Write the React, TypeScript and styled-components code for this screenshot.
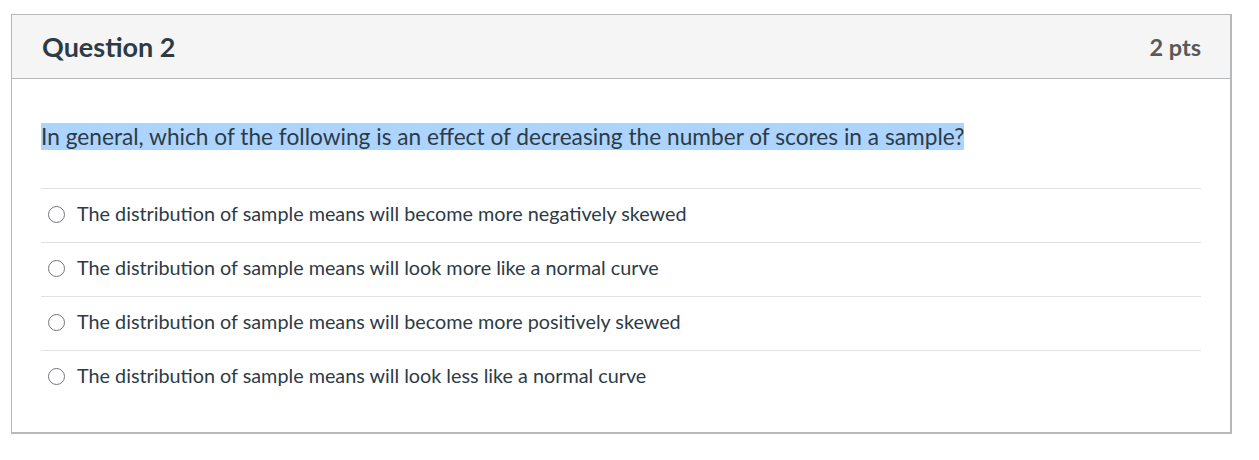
import React from "react";
import styled, { createGlobalStyle } from "styled-components";

const GlobalStyle = createGlobalStyle`
  body {
    margin: 0;
    background: #ffffff;
    font-family: Lato, "Liberation Sans", sans-serif;
    color: #2d3b45;
  }
`;

const Page = styled.div`
  padding: 14px 28px 0 11px;
`;

const Card = styled.div`
  border: 1px solid #b5b9bc;
  border-right-width: 2px;
  border-bottom-width: 2px;
  width: 1218px;
  background: #ffffff;
`;

const Header = styled.div`
  display: flex;
  align-items: center;
  justify-content: space-between;
  height: 63px;
  padding: 0 29px 0 30px;
  background: #f5f5f5;
  border-bottom: 1px solid #b5b9bc;
`;

const Title = styled.h2`
  margin: 0;
  font-size: 27px;
  font-weight: 700;
  color: #2d3b45;
`;

const Points = styled.div`
  font-size: 23.5px;
  font-weight: 700;
  color: #595959;
`;

const Body = styled.div`
  padding: 42px 29px 28px 29px;
`;

const Prompt = styled.p`
  margin: 0 0 36px 0;
  font-size: 22.7px;
  line-height: 31px;
`;

const Highlight = styled.span`
  background: #acd4fe;
`;

const AnswerList = styled.div`
  display: flex;
  flex-direction: column;
`;

const Answer = styled.label`
  display: flex;
  align-items: center;
  gap: 12px;
  height: 54px;
  padding-left: 7px;
  padding-bottom: 6px;
  box-sizing: border-box;
  border-top: 1px solid #dde1e4;
  font-size: 19.8px;
  color: #2d3b45;
`;

const Radio = styled.span`
  width: 17px;
  height: 17px;
  margin-top: 4px;
  border: 1.5px solid #6f767c;
  border-radius: 50%;
  box-sizing: border-box;
  flex-shrink: 0;
`;

const answers = [
  "The distribution of sample means will become more negatively skewed",
  "The distribution of sample means will look more like a normal curve",
  "The distribution of sample means will become more positively skewed",
  "The distribution of sample means will look less like a normal curve",
];

const App: React.FC = () => {
  return (
    <>
      <GlobalStyle />
      <Page>
        <Card>
          <Header>
            <Title>Question 2</Title>
            <Points>2 pts</Points>
          </Header>
          <Body>
            <Prompt>
              <Highlight>
                In general, which of the following is an effect of decreasing the number of scores in a sample?
              </Highlight>
            </Prompt>
            <AnswerList>
              {answers.map((a) => (
                <Answer key={a}>
                  <Radio />
                  {a}
                </Answer>
              ))}
            </AnswerList>
          </Body>
        </Card>
      </Page>
    </>
  );
};

export default App;
